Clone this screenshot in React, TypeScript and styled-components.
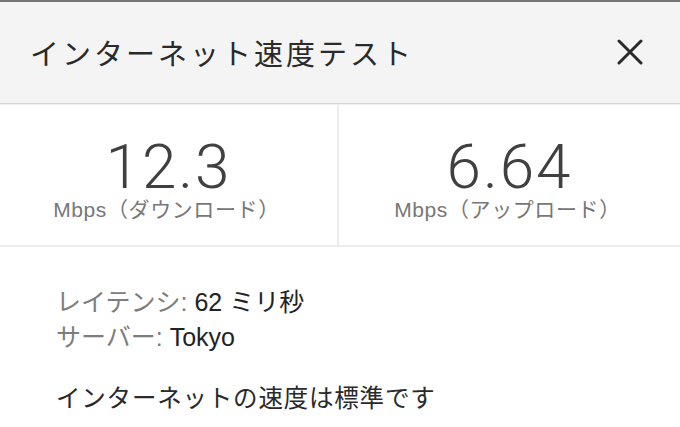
import React from "react";
import styled, { createGlobalStyle } from "styled-components";

const Global = createGlobalStyle`
  html, body { margin: 0; padding: 0; background: #ffffff; }
  body {
    font-family: "Liberation Sans", "Noto Sans CJK JP", sans-serif;
    -webkit-font-smoothing: antialiased;
  }
`;

const Page = styled.div`
  width: 680px;
  height: 427px;
  overflow: hidden;
  background: #ffffff;
`;

const Header = styled.header`
  height: 99px;
  border-top: 2px solid #767676;
  border-bottom: 1px solid #d4d4d4;
  box-shadow: 0 1px 1px rgba(0, 0, 0, 0.06);
  background: #f4f4f4;
  display: flex;
  align-items: center;
  justify-content: space-between;
  padding: 0 36px 2px 30px;
`;

const Title = styled.h1`
  margin: 0;
  font-family: "Noto Sans CJK JP", sans-serif;
  font-weight: 400;
  font-size: 29px;
  color: #2a2a2a;
  letter-spacing: 3px;
`;

const CloseButton = styled.button`
  border: none;
  background: transparent;
  padding: 0;
  width: 28px;
  height: 28px;
  display: flex;
  align-items: center;
  justify-content: center;
  cursor: pointer;
`;

const Stats = styled.section`
  display: grid;
  grid-template-columns: 339px 1fr;
  height: 141px;
  border-bottom: 2px solid #ececec;
`;

const StatCell = styled.div<{ $divider?: boolean }>`
  display: flex;
  flex-direction: column;
  align-items: center;
  justify-content: center;
  padding-top: 8px;
  border-right: ${(p) => (p.$divider ? "2px solid #ececec" : "none")};
`;

const StatValue = styled.div`
  font-family: Roboto, "Liberation Sans", sans-serif;
  font-weight: 300;
  font-size: 62px;
  line-height: 62px;
  letter-spacing: 2px;
  color: #404040;
`;

const StatLabel = styled.div<{ $shift: number }>`
  font-family: "Liberation Sans", "Noto Sans CJK JP", sans-serif;
  font-size: 21px;
  line-height: 24px;
  color: #777777;
  margin-left: ${(p) => p.$shift}px;
  letter-spacing: 0.6px;
`;

const Info = styled.section`
  padding: 38px 0 0 56px;
`;

const InfoLine = styled.div`
  font-size: 25px;
  line-height: 35px;
  color: #222222;
`;

const Key = styled.span`
  color: #7d7d7d;
`;

const Verdict = styled.p`
  margin: 24px 0 0;
  font-family: "Noto Sans CJK JP", sans-serif;
  font-size: 24.5px;
  line-height: 35px;
  letter-spacing: 0.8px;
  color: #2a2a2a;
`;

export default function App() {
  return (
    <Page>
      <Global />
      <Header>
        <Title>インターネット速度テスト</Title>
        <CloseButton aria-label="閉じる">
          <svg width="26" height="26" viewBox="0 0 26 26">
            <path
              d="M2 2 L24 24 M24 2 L2 24"
              stroke="#2a2a2a"
              strokeWidth="3"
              strokeLinecap="round"
            />
          </svg>
        </CloseButton>
      </Header>
      <Stats>
        <StatCell $divider>
          <StatValue>12.3</StatValue>
          <StatLabel $shift={-4}>Mbps（ダウンロード）</StatLabel>
        </StatCell>
        <StatCell>
          <StatValue>6.64</StatValue>
          <StatLabel $shift={-4}>Mbps（アップロード）</StatLabel>
        </StatCell>
      </Stats>
      <Info>
        <InfoLine>
          <Key>レイテンシ: </Key>62 ミリ秒
        </InfoLine>
        <InfoLine>
          <Key>サーバー: </Key>Tokyo
        </InfoLine>
        <Verdict>インターネットの速度は標準です</Verdict>
      </Info>
    </Page>
  );
}
